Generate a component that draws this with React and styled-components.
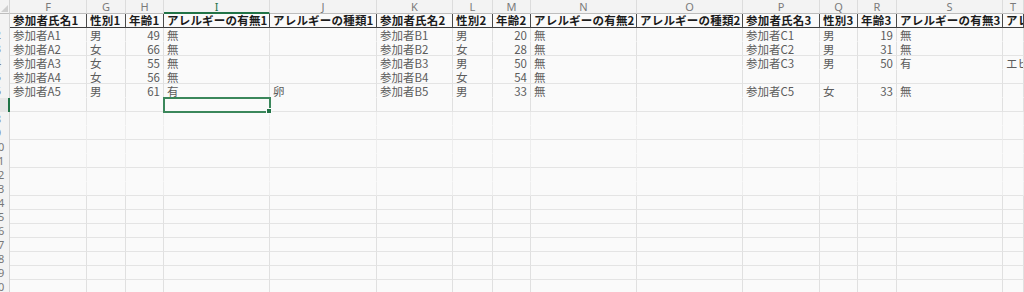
import React from 'react';
import styled, { createGlobalStyle, css } from 'styled-components';

const GlobalStyle = createGlobalStyle`
    html, body {
        margin: 0;
        padding: 0;
        background: #fafafa;
        overflow: hidden;
    }
    body {
        font-family: "Noto Sans CJK JP", "Noto Sans", sans-serif;
    }
`;

const columns = [
    { letter: 'F', width: 77 },
    { letter: 'G', width: 39 },
    { letter: 'H', width: 38 },
    { letter: 'I', width: 106 },
    { letter: 'J', width: 107 },
    { letter: 'K', width: 76 },
    { letter: 'L', width: 40 },
    { letter: 'M', width: 38 },
    { letter: 'N', width: 106 },
    { letter: 'O', width: 106 },
    { letter: 'P', width: 77 },
    { letter: 'Q', width: 38 },
    { letter: 'R', width: 39 },
    { letter: 'S', width: 106 },
    { letter: 'T', width: 0 },
];

const template = '10px ' + columns.map((c) => (c.width ? c.width + 'px' : '1fr')).join(' ');

const headers = [
    '参加者氏名1', '性別1', '年齢1', 'アレルギーの有無1', 'アレルギーの種類1',
    '参加者氏名2', '性別2', '年齢2', 'アレルギーの有無2', 'アレルギーの種類2',
    '参加者氏名3', '性別3', '年齢3', 'アレルギーの有無3', 'アレルギーの種類3',
];

const data = [
    ['参加者A1', '男', 49, '無', '', '参加者B1', '男', 20, '無', '', '参加者C1', '男', 19, '無', ''],
    ['参加者A2', '女', 66, '無', '', '参加者B2', '女', 28, '無', '', '参加者C2', '男', 31, '無', ''],
    ['参加者A3', '女', 55, '無', '', '参加者B3', '男', 50, '無', '', '参加者C3', '男', 50, '有', 'エビ'],
    ['参加者A4', '女', 56, '無', '', '参加者B4', '女', 54, '無', '', '', '', '', '', ''],
    ['参加者A5', '男', 61, '有', '卵', '参加者B5', '男', 33, '無', '', '参加者C5', '女', 33, '無', ''],
];

const SELECTED_ROW = 7;
const SELECTED_COL = 'I';
const LAST_ROW = 20;

const Sheet = styled.div`
    width: 1024px;
    height: 292px;
    overflow: hidden;
    background: #fafafa;
`;

const Row = styled.div`
    display: grid;
    grid-template-columns: ${template};
    height: 14px;
`;

const Corner = styled.div`
    background: #f3f3f3;
    border-right: 1px solid #d4d4d4;
    border-bottom: 1px solid #bdbdbd;
    box-sizing: border-box;
    display: flex;
    align-items: flex-end;
    justify-content: flex-end;
    padding: 0 1px 1px 0;
`;

const ColHead = styled.div`
    box-sizing: border-box;
    background: #f3f3f3;
    border-right: 1px solid #dcdcdc;
    border-bottom: ${(p) => (p.$active ? '2px solid #217346' : '1px solid #bdbdbd')};
    color: ${(p) => (p.$active ? '#217346' : '#7a7a7a')};
    font-family: "Noto Sans", "Liberation Sans", sans-serif;
    font-size: 11px;
    line-height: 13px;
    text-align: center;
    overflow: hidden;
`;

const RowHead = styled.div`
    box-sizing: border-box;
    background: ${(p) => (p.$active ? '#e6e6e6' : '#f3f3f3')};
    border-right: ${(p) => (p.$active ? '2px solid #217346' : '1px solid #d4d4d4')};
    overflow: hidden;
    display: flex;
    justify-content: flex-end;
`;

const RowNumber = styled.span`
    flex: 0 0 22px;
    text-align: center;
    font-family: "Noto Sans", "Liberation Sans", sans-serif;
    font-size: 11px;
    line-height: 14px;
    color: #777;
`;

const HeadCell = styled.div`
    box-sizing: border-box;
    border-right: 1px solid #4a4a4a;
    border-bottom: 1px solid #3c3c3c;
    padding: 0 0 0 3px;
    font-size: 11.5px;
    letter-spacing: 0.2px;
    font-weight: 700;
    line-height: 13px;
    color: #1c1c1c;
    white-space: nowrap;
    overflow: hidden;
`;

const Cell = styled.div`
    position: relative;
    box-sizing: border-box;
    border-right: 1px solid ${(p) => (p.$faint ? '#ededed' : '#e0e0e0')};
    border-bottom: 1px solid ${(p) => (p.$line ? '#e4e4e4' : 'transparent')};
    padding: 0 3px;
    font-size: 11.5px;
    line-height: 14px;
    color: #5c5c5c;
    text-align: ${(p) => (p.$num ? 'right' : 'left')};
    white-space: nowrap;
    overflow: ${(p) => (p.$selected ? 'visible' : 'hidden')};

    ${(p) => p.$selected && css`
        outline: 2px solid #3b875b;
        outline-offset: -1px;
        z-index: 1;

        &::after {
            content: '';
            position: absolute;
            right: -3px;
            bottom: -3px;
            width: 4px;
            height: 4px;
            background: #217346;
            border: 1px solid #fafafa;
        }
    `}
`;

const CornerMark = () => (
    <svg width="7" height="7" viewBox="0 0 7 7">
        <path d="M7 0 L7 7 L0 7 Z" fill="#cfcfcf" />
    </svg>
);

const rowHasLine = (r) => (r >= 3 && r % 2 === 1) || r >= 13;

const App = () => {
    const rows = [];
    for (let r = 2; r <= LAST_ROW; r++) rows.push(r);

    return (
        <>
            <GlobalStyle />
            <Sheet>
                <Row>
                    <Corner>
                        <CornerMark />
                    </Corner>
                    {columns.map((c) => (
                        <ColHead key={c.letter} $active={c.letter === SELECTED_COL}>
                            {c.letter}
                        </ColHead>
                    ))}
                </Row>
                <Row>
                    <RowHead>
                        <RowNumber>1</RowNumber>
                    </RowHead>
                    {headers.map((h) => (
                        <HeadCell key={h}>{h}</HeadCell>
                    ))}
                </Row>
                {rows.map((r) => {
                    const values = data[r - 2] || [];
                    return (
                        <Row key={r}>
                            <RowHead $active={r === SELECTED_ROW}>
                                <RowNumber>{r}</RowNumber>
                            </RowHead>
                            {columns.map((c, i) => {
                                const v = values[i];
                                return (
                                    <Cell
                                        key={c.letter}
                                        $num={typeof v === 'number'}
                                        $line={rowHasLine(r)}
                                        $faint={r > 7 && r < 14}
                                        $selected={r === SELECTED_ROW && c.letter === SELECTED_COL}
                                    >
                                        {v}
                                    </Cell>
                                );
                            })}
                        </Row>
                    );
                })}
            </Sheet>
        </>
    );
};

export default App;
